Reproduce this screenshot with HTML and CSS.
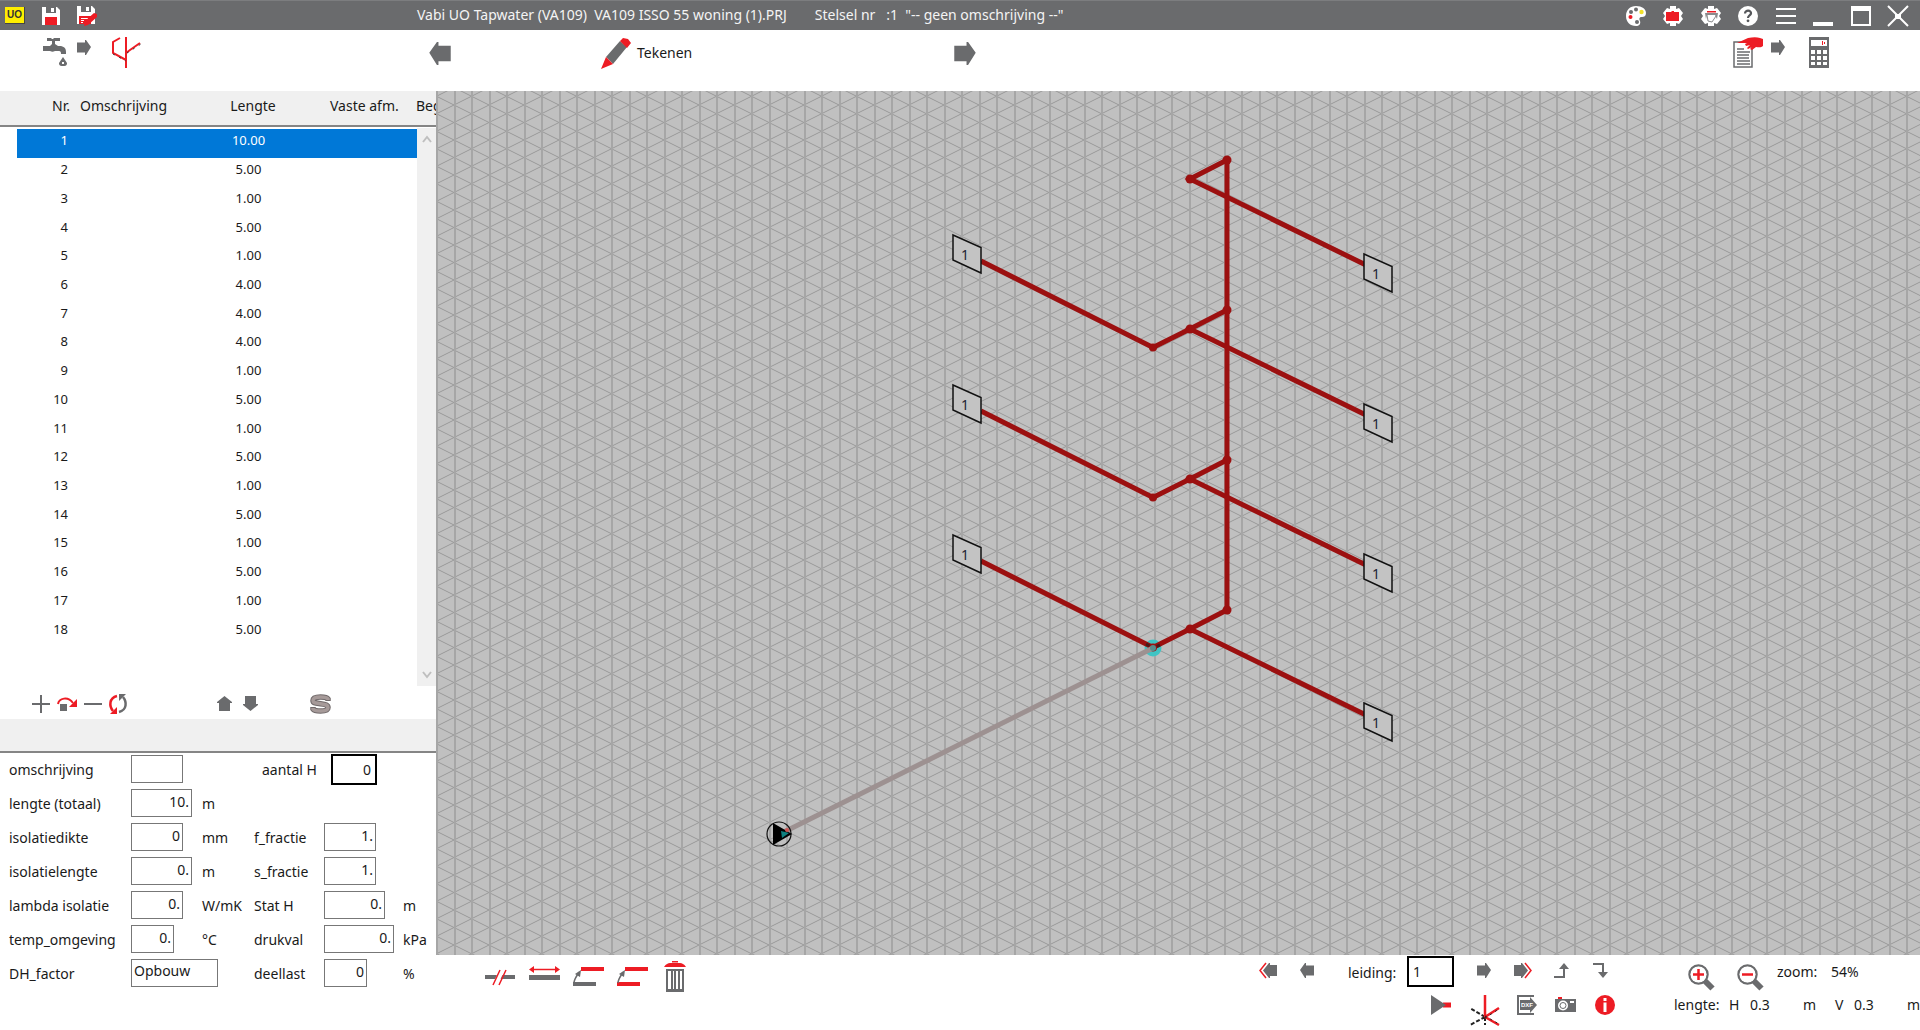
FILE: index.html
```html
<!DOCTYPE html>
<html lang="nl">
<head>
<meta charset="utf-8">
<title>Vabi UO Tapwater (VA109)</title>
<link rel="stylesheet" href="styles.css">
</head>
<body>
<svg class="defs" aria-hidden="true">
  <symbol id="arrow-right" viewBox="0 0 14 15"><path d="M0 2.500h8V0h1l5 7-5 8H8v-2.500H0z"/></symbol>
  <symbol id="arrow-left" viewBox="0 0 14 15"><path d="M14 2.500H6V0H5L0 7l5 8h1v-2.500h8z"/></symbol>
</svg>

<header class="titlebar">
  <div class="quick">
    <button class="icon" aria-label="UO"><span class="uo">UO</span></button>
    <button class="icon" aria-label="Opslaan"><svg width="18" height="18" viewBox="0 0 18 18"><path fill="#fff" d="M0 0h4v6h10V0h1l3 3v15H0z"/><path fill="#fff" d="M9 1h3v4H9z"/><path fill="#ed1c24" d="M3 10h12v8H3z"/></svg></button>
    <button class="icon" aria-label="Opslaan als"><svg width="20" height="20" viewBox="0 0 20 20"><path fill="#fff" d="M0 0h4v6h10V0h1l3 3v15H0z"/><path fill="#fff" d="M9 1h3v4H9z"/><path fill="#ed1c24" d="M2 10h12v8H2z"/><path fill="#fff" d="M4 12h7v1H4zM4 14h3v1H4zM4 16h2v1H4z"/><path fill="#ed1c24" d="M7 20l1-5 9-8 3 1v3l-9 8z"/></svg></button>
  </div>
  <h1 class="title">Vabi UO Tapwater (VA109)  VA109 ISSO 55 woning (1).PRJ<span>Stelsel nr   :1  "-- geen omschrijving --"</span></h1>
  <div class="window-tools">
    <button class="icon" aria-label="Kleuren"><svg width="20" height="20" viewBox="0 0 20 20"><path fill="#fff" d="M10 0c6 0 10 3 10 7 0 3-2 4-4 4-3 0-3 2-2 4 1 3-1 5-4 5C4 20 0 16 0 10S4 0 10 0z"/><circle cx="5" cy="6" r="2" fill="#6a6b6d"/><circle cx="10" cy="3.500" r="2" fill="#6a6b6d"/><circle cx="15.500" cy="6" r="2.200" fill="#f3e12a"/><circle cx="4.500" cy="11" r="2" fill="#ed1c24"/><circle cx="11" cy="16" r="2" fill="#6a6b6d"/></svg></button>
    <button class="icon" aria-label="Projectinstellingen"><svg width="20" height="20" viewBox="0 0 20 20"><path fill="#fff" d="M7 0h6v3l3-1 4 5-2 3 2 3-4 5-3-1v3H7v-3l-3 1-4-5 2-3-2-3 4-5 3 1z"/><path fill="#ed1c24" d="M3 6h5l1-1h2v1h5v9H3z"/></svg></button>
    <button class="icon" aria-label="Printinstellingen"><svg width="20" height="20" viewBox="0 0 20 20"><path fill="#fff" d="M7 0h6v3l3-1 4 5-2 3 2 3-4 5-3-1v3H7v-3l-3 1-4-5 2-3-2-3 4-5 3 1z"/><path fill="#8a8b8d" d="M4 7h13l-1 6-2-4H6l-1 4z"/><path fill="#ed1c24" d="M6 5h9v1.500H6z"/><path fill="none" stroke="#8a8b8d" d="M6 9l1 6 4 1 4-6"/></svg></button>
    <button class="icon" aria-label="Help"><svg width="20" height="20" viewBox="0 0 20 20"><circle cx="10" cy="10" r="10" fill="#fff"/><path fill="none" stroke="#55575a" stroke-width="2.200" d="M7 7.500c0-4 6.500-3.500 6 0-.3 2-3 2-3 4.500"/><circle cx="10" cy="14.800" r="1.400" fill="#55575a"/></svg></button>
    <button class="icon" aria-label="Menu"><svg width="20" height="20" viewBox="0 0 20 20"><path stroke="#fff" stroke-width="2" d="M0 3h20M0 10h20M0 17h20"/></svg></button>
    <button class="icon" aria-label="Minimaliseren"><svg width="20" height="20" viewBox="0 0 20 20"><path fill="#fff" d="M0 16h20v4H0z"/></svg></button>
    <button class="icon" aria-label="Maximaliseren"><svg width="20" height="20" viewBox="0 0 20 20"><path fill="#fff" fill-rule="evenodd" d="M0 0h20v20H0zM2 5v13h16V5z"/></svg></button>
    <button class="icon" aria-label="Sluiten"><svg width="20" height="20" viewBox="0 0 20 20"><path stroke="#fff" stroke-width="2" d="M0 0l20 20M20 0L0 20"/><path fill="#fff" d="M7 8h6v5H7z"/></svg></button>
  </div>
</header>

<nav class="toolbar" aria-label="Stappen">
  <div class="steps-left">
    <button class="icon" aria-label="Tapwater"><svg width="24" height="30" viewBox="0 0 24 30"><g fill="#6a6b6d"><path d="M4 1h4l1 1h1l1-1h6v3h-5v3l3 2h3c4 1 5 3 5 6v2h-5c0-3-1-3-3-3h-3c-2 1-3 1-5 0H0V9h7l2-2V4H4z"/><path d="M20 20l4 6c0 3-2 3-4 3s-4 0-4-3z"/></g><path fill="#fff" d="M19 25h2v2h-2z"/></svg></button>
    <svg class="gray" width="14" height="15"><use href="#arrow-right"/></svg>
    <button class="icon" aria-label="Stelsel"><svg width="30" height="31" viewBox="0 0 30 31"><path fill="none" stroke="#ed1c24" stroke-width="2" d="M15 0v31M15 23L2 16V5l7-4M15 16l4-3 10-7"/><path stroke="#333" stroke-dasharray="2 5" d="M2 17l13 7M16 16l14-9"/></svg></button>
  </div>
  <div class="step-current">
    <button class="icon" aria-label="Vorige stap"><svg class="gray" width="22" height="23"><use href="#arrow-left"/></svg></button>
    <button class="icon step-label"><svg width="30" height="31" viewBox="0 0 30 31"><path fill="#6a6b6d" d="M5 19L19 3l7 6L12 26z"/><path fill="#ed1c24" d="M19 3l3-3 5 1 3 4-4 5zM5 19l7 7-12 5z"/></svg>Tekenen</button>
    <button class="icon" aria-label="Volgende stap"><svg class="gray" width="22" height="23"><use href="#arrow-right"/></svg></button>
  </div>
  <div class="steps-right">
    <button class="icon" aria-label="Gegevens"><svg width="31" height="31" viewBox="0 0 31 31"><path fill="#fff" stroke="#6a6b6d" stroke-width="1.500" d="M1 5h18v25H1z"/><path stroke="#6a6b6d" stroke-width="1.500" d="M4 12h7M4 15h13M4 18h12M4 21h12M4 24h13M4 27h13"/><path fill="#ed1c24" d="M4 6L15 1c5-1 9-1 12 0l3 1v7c-2 2-5 1-7 1l-4 3-2-1 2-2-4 2-1-1 3-3-4 1-1-2 2-1z"/></svg></button>
    <svg class="gray" width="14" height="15"><use href="#arrow-right"/></svg>
    <button class="icon" aria-label="Berekenen"><svg width="20" height="31" viewBox="0 0 20 31"><path fill="#6a6b6d" d="M0 0h20v31H0z"/><path fill="#fff" d="M2 3h16v6H2zM2 13h4v4H2zM8 13h4v4H8zM14 13h4v4h-4zM2 19h4v4H2zM8 19h4v4H8zM14 19h4v4h-4zM2 25h4v3H2zM8 25h4v3H8zM14 25h4v3h-4z"/><path fill="#ed1c24" d="M13 4h1v4h-1zM15 5h1v2h-1z"/></svg></button>
  </div>
</nav>

<main class="workspace">
  <aside class="sidebar">
    <section class="list">
      <table class="pipes">
        <thead><tr><th class="edge"></th><th class="nr">Nr.</th><th class="name">Omschrijving</th><th class="len">Lengte</th><th class="fixed">Vaste afm.</th><th class="beg">Beg</th></tr></thead>
        <tbody>
          <tr class="selected"><td></td><td>1</td><td></td><td>10.00</td><td></td><td></td></tr>
          <tr><td></td><td>2</td><td></td><td>5.00</td><td></td><td></td></tr>
          <tr><td></td><td>3</td><td></td><td>1.00</td><td></td><td></td></tr>
          <tr><td></td><td>4</td><td></td><td>5.00</td><td></td><td></td></tr>
          <tr><td></td><td>5</td><td></td><td>1.00</td><td></td><td></td></tr>
          <tr><td></td><td>6</td><td></td><td>4.00</td><td></td><td></td></tr>
          <tr><td></td><td>7</td><td></td><td>4.00</td><td></td><td></td></tr>
          <tr><td></td><td>8</td><td></td><td>4.00</td><td></td><td></td></tr>
          <tr><td></td><td>9</td><td></td><td>1.00</td><td></td><td></td></tr>
          <tr><td></td><td>10</td><td></td><td>5.00</td><td></td><td></td></tr>
          <tr><td></td><td>11</td><td></td><td>1.00</td><td></td><td></td></tr>
          <tr><td></td><td>12</td><td></td><td>5.00</td><td></td><td></td></tr>
          <tr><td></td><td>13</td><td></td><td>1.00</td><td></td><td></td></tr>
          <tr><td></td><td>14</td><td></td><td>5.00</td><td></td><td></td></tr>
          <tr><td></td><td>15</td><td></td><td>1.00</td><td></td><td></td></tr>
          <tr><td></td><td>16</td><td></td><td>5.00</td><td></td><td></td></tr>
          <tr><td></td><td>17</td><td></td><td>1.00</td><td></td><td></td></tr>
          <tr><td></td><td>18</td><td></td><td>5.00</td><td></td><td></td></tr>
        </tbody>
      </table>
      <div class="scrollbar" aria-hidden="true">
        <svg width="10" height="8" viewBox="0 0 10 8"><path d="M1 7l4-5 4 5"/></svg>
        <svg width="10" height="8" viewBox="0 0 10 8"><path d="M1 1l4 5 4-5"/></svg>
      </div>
    </section>

    <div class="list-tools">
      <button class="icon" aria-label="Toevoegen"><svg width="18" height="18" viewBox="0 0 18 18"><path stroke="#6a6b6d" stroke-width="2" d="M0 9h18M9 0v18"/></svg></button>
      <button class="icon" aria-label="Invoegen"><svg width="20" height="18" viewBox="0 0 20 18"><path fill="#6a6b6d" d="M3 9h7v7H3z"/><path fill="none" stroke="#ed1c24" stroke-width="2" d="M1 9c1-6 10-8 15-1"/><path fill="#ed1c24" d="M20 4v8h-8z"/></svg></button>
      <button class="icon" aria-label="Verwijderen"><svg width="18" height="18" viewBox="0 0 18 18"><path stroke="#6a6b6d" stroke-width="2" d="M0 9h18"/></svg></button>
      <button class="icon" aria-label="Omkeren"><svg width="18" height="20" viewBox="0 0 18 20"><path fill="none" stroke="#ed1c24" stroke-width="2.500" d="M8 2C0 4 0 12 4 17"/><path fill="#ed1c24" d="M8 13v7H1z"/><path fill="none" stroke="#6a6b6d" stroke-width="2.500" d="M10 18c8-2 8-10 4-15"/><path fill="#6a6b6d" d="M10 7V0h7z"/></svg></button>
      <button class="icon up" aria-label="Omhoog"><svg class="gray" width="15" height="15" viewBox="0 0 15 15"><path d="M7.500 0L15 6v1h-2v8H2V7H0V6z"/></svg></button>
      <button class="icon down" aria-label="Omlaag"><svg class="gray" width="15" height="15" viewBox="0 0 15 15"><path d="M7.500 15L15 9V8h-2V0H2v8H0v1z"/></svg></button>
      <button class="icon sort" aria-label="Stelsel S"><svg width="21" height="20" viewBox="0 0 21 20"><path fill="none" stroke="#716a6b" stroke-width="5.500" d="M18 7V5c-1-1.500-3-2-7.500-2S3 4 3 6.500 5 9 10.500 9.700s7.500 1.300 7.500 3.800-3 3.500-7.500 3.500S4 16.500 3 15v-2"/><path fill="none" stroke="#a69a99" stroke-width="3.500" d="M18 6V5c-1-1.500-3-2-7.500-2S3 4 3 6.500 5 9 10.500 9.700s7.500 1.300 7.500 3.800-3 3.500-7.500 3.500S4 16.500 3 15v-1"/></svg></button>
    </div>
    <div class="band"></div>

    <form class="props">
      <label for="oms">omschrijving</label><input id="oms" class="w52" type="text"><span></span><label class="right" for="aantal">aantal H</label><input id="aantal" class="strong" type="text" value="0"><span></span>
      <label for="len">lengte (totaal)</label><input id="len" class="w61" type="text" value="10."><span>m</span><span></span><span></span><span></span>
      <label for="dik">isolatiedikte</label><input id="dik" class="w52" type="text" value="0"><span>mm</span><label for="ff">f_fractie</label><input id="ff" class="w52" type="text" value="1."><span></span>
      <label for="isl">isolatielengte</label><input id="isl" class="w61" type="text" value="0."><span>m</span><label for="sf">s_fractie</label><input id="sf" class="w52" type="text" value="1."><span></span>
      <label for="lam">lambda isolatie</label><input id="lam" class="w52" type="text" value="0."><span>W/mK</span><label for="sta">Stat H</label><input id="sta" class="w61" type="text" value="0."><span>m</span>
      <label for="tem">temp_omgeving</label><input id="tem" class="w43" type="text" value="0."><span>°C</span><label for="dru">drukval</label><input id="dru" class="w70" type="text" value="0."><span>kPa</span>
      <label for="dhf">DH_factor</label><select id="dhf"><option>Opbouw</option></select><span></span><label for="dee">deellast</label><input id="dee" class="w43" type="text" value="0"><span>%</span>
    </form>
  </aside>

  <section class="drawing">
    <svg class="canvas" role="img" aria-label="Isometrische tekening van het leidingstelsel">
      <defs>
        <pattern id="grid" x="18" y="14" width="70" height="35" patternUnits="userSpaceOnUse">
          <path class="diagonals" d="M0 -35L70 0M0 -17.500L70 17.500M0 0L70 35M0 17.500L70 52.500M0 35L70 70M0 0L70 -35M0 17.500L70 -17.500M0 35L70 0M0 52.500L70 17.500M0 70L70 35"/>
          <path class="verticals" d="M1 0v35M18 0v35M36 0v35M53 0v35"/>
        </pattern>
        <g id="tap-right"><path fill="#c3c3c3" stroke="#111" stroke-width="1.500" d="M0 0l28 12.500V38L0 25z"/><text x="12" y="25" text-anchor="middle">1</text></g>
        <g id="floor">
          <path d="M791 69L754 88l180 88"/><circle cx="791" cy="69" r="4.500"/><circle cx="754" cy="88" r="4.500"/>
        </g>
        <g id="branch-left"><path d="M754 88l-37 18.500L545 20"/><circle cx="717" cy="106.500" r="4"/></g>
      </defs>
      <rect width="100%" height="100%" fill="#c0c0c0"/>
      <rect width="100%" height="100%" fill="url(#grid)"/>
      <circle cx="717" cy="557" r="8.500" fill="#3fc4c4"/>
      <g class="pipe">
        <path d="M791 69v450"/>
        <use href="#floor"/><use href="#floor" y="150"/><use href="#floor" y="300"/><use href="#floor" y="450"/>
        <use href="#branch-left" y="150"/><use href="#branch-left" y="300"/><use href="#branch-left" y="450"/>
      </g>
      <path fill="none" stroke="#222" stroke-width="3" stroke-dasharray="4 2" opacity=".7" d="M710 553l7 4 7-3"/>
      <path fill="none" stroke="#9d9191" stroke-width="5" d="M717 557L348 741"/>
      <circle cx="717" cy="557" r="3" fill="#568d8d"/>
      <use href="#tap-right" x="928" y="163"/><use href="#tap-right" x="928" y="313"/><use href="#tap-right" x="928" y="463"/><use href="#tap-right" x="928" y="612"/>
      <use href="#tap-right" x="517" y="144"/><use href="#tap-right" x="517" y="294"/><use href="#tap-right" x="517" y="444"/>
      <circle cx="343" cy="743" r="12" fill="none" stroke="#111" stroke-width="1.200"/>
      <path d="M337 732l19 11-19 11z"/><path fill="#0f8080" d="M345 740l8 2-7 5z"/><circle cx="351" cy="739" r="2" fill="#c55"/>
    </svg>

    <footer class="bottombar">
      <div class="edit-tools">
        <button class="icon" aria-label="Splitsen"><svg width="31" height="31" viewBox="0 0 31 31"><path fill="#6a6b6d" d="M0 14h30v4H0z"/><path stroke="#fff" stroke-width="5" d="M11 22l6-13"/><path stroke="#ed1c24" stroke-width="1.500" d="M8 24l7-15M14 24l7-15"/></svg></button>
        <button class="icon" aria-label="Verlengen"><svg width="31" height="31" viewBox="0 0 31 31"><path fill="#6a6b6d" d="M0 14h31v5H0z"/><path stroke="#ed1c24" stroke-width="1.500" d="M2 8.500h27"/><path fill="#ed1c24" d="M0 8.500L5 5v7zM31 8.500L26 5v7z"/></svg></button>
        <button class="icon" aria-label="Kopiëren"><svg width="31" height="31" viewBox="0 0 31 31"><path fill="#ed1c24" d="M8 6h23v4H8z"/><path fill="#6a6b6d" d="M0 21h23v4H0zM8 9l-6 4 5 3z"/><path fill="none" stroke="#6a6b6d" stroke-width="1.500" d="M1 22c0-4 3-7 5-11"/></svg></button>
        <button class="icon" aria-label="Verplaatsen"><svg width="31" height="31" viewBox="0 0 31 31"><path fill="#ed1c24" d="M8 6h23v4H8zM0 21h23v4H0z"/><path fill="#6a6b6d" d="M8 9l-6 4 5 3z"/><path fill="none" stroke="#6a6b6d" stroke-width="1.500" d="M1 22c0-4 3-7 5-11"/></svg></button>
        <button class="icon" aria-label="Wissen"><svg width="22" height="31" viewBox="0 0 22 31"><path fill="#ed1c24" d="M8 0h6v1.500H8zM0 6c2-3 4-4 6-4h10c2 0 4 1 6 4z"/><path fill="#6a6b6d" fill-rule="evenodd" d="M2 8h18v23H2zM4 10v18h3V10zM9 10v18h1V10zM12 10v18h2V10zM16 10v18h2V10z"/></svg></button>
      </div>

      <div class="nav-tools">
        <div class="row">
          <button class="icon" aria-label="Eerste"><svg width="18" height="15" viewBox="0 0 18 15"><path fill="#6a6b6d" d="M18 2v11h-7v2h-1L4 7.500 10 0h1v2z"/><path fill="none" stroke="#ed1c24" stroke-width="1.500" d="M7 0L1 7.500 7 15"/></svg></button>
          <button class="icon" aria-label="Vorige"><svg class="gray" width="14" height="15"><use href="#arrow-left"/></svg></button>
          <label for="leiding">leiding:</label><input id="leiding" class="strong" type="text" value="1">
          <button class="icon" aria-label="Volgende"><svg class="gray" width="14" height="15"><use href="#arrow-right"/></svg></button>
          <button class="icon" aria-label="Laatste"><svg width="18" height="15" viewBox="0 0 18 15"><path fill="#6a6b6d" d="M0 2v11h7v2h1l6-7.500L8 0H7v2z"/><path fill="none" stroke="#ed1c24" stroke-width="1.500" d="M11 0l6 7.500-6 7.500"/></svg></button>
          <button class="icon" aria-label="Vertakking omhoog"><svg width="15" height="15" viewBox="0 0 15 15"><path fill="none" stroke="#6a6b6d" stroke-width="2" d="M0 14h10V5"/><path fill="#6a6b6d" d="M10 0l5 6H5z"/></svg></button>
          <button class="icon" aria-label="Vertakking omlaag"><svg width="15" height="15" viewBox="0 0 15 15"><path fill="none" stroke="#6a6b6d" stroke-width="2" d="M0 1h10v9"/><path fill="#6a6b6d" d="M10 15l5-6H5z"/></svg></button>
        </div>
        <div class="row second">
          <button class="icon wide" aria-label="Begin"><svg width="20" height="20" viewBox="0 0 20 20"><path fill="#ed1c24" d="M12 7.500h8v5h-8z"/><path fill="#6a6b6d" d="M0 0l15 10L0 20z"/></svg></button>
          <button class="icon wide" aria-label="Assen"><svg width="30" height="44" viewBox="0 0 30 44"><path fill="none" stroke="#222" stroke-width="2" stroke-dasharray="4 2" d="M15 34L0 25M15 34L0 42M15 34v8"/><path stroke="#ed1c24" stroke-width="2.500" d="M15 34V12M15 34l14-9M15 34l14 8"/><path stroke="#222" stroke-dasharray="2 4" d="M15 35l14-9M15 33l14 8"/></svg></button>
          <button class="icon" aria-label="Exporteren naar DXF"><svg width="20" height="20" viewBox="0 0 20 20"><path fill="none" stroke="#6a6b6d" stroke-width="2" d="M17 1H1v18h16"/><path fill="#6a6b6d" d="M3 5h10V2l7 8-7 8v-3H3z"/><text class="dxf" x="4" y="12">DXF</text></svg></button>
          <button class="icon" aria-label="Foto"><svg width="21" height="20" viewBox="0 0 21 20"><path fill="#6a6b6d" d="M0 4h21v13H0z"/><path fill="#ed1c24" d="M3 2h4v2H3z"/><path fill="#fff" d="M15 6h4v2h-4z"/><circle cx="8" cy="10.500" r="5" fill="#fff"/><circle cx="8" cy="10.500" r="3" fill="none" stroke="#6a6b6d"/></svg></button>
          <button class="icon" aria-label="Informatie"><svg width="20" height="20" viewBox="0 0 20 20"><circle cx="10" cy="10" r="10" fill="#ed1c24"/><path fill="#fff" d="M8.500 3h3v3h-3zM8.500 7.500h3V17h-3z"/></svg></button>
        </div>
      </div>

      <div class="readout">
        <div class="row">
          <button class="icon zoom" aria-label="Inzoomen"><svg width="27" height="27" viewBox="0 0 27 27"><circle cx="10.500" cy="10.500" r="9" fill="#fff" stroke="#6a6b6d" stroke-width="2.500"/><path stroke="#6a6b6d" stroke-width="6" d="M16.500 16.500l8 8"/><circle cx="10.500" cy="10.500" r="8" fill="#fff"/><path stroke="#ed1c24" stroke-width="2.500" d="M5 10.500h11M10.500 5v11"/></svg></button>
          <button class="icon zoom" aria-label="Uitzoomen"><svg width="27" height="27" viewBox="0 0 27 27"><circle cx="10.500" cy="10.500" r="9" fill="#fff" stroke="#6a6b6d" stroke-width="2.500"/><path stroke="#6a6b6d" stroke-width="6" d="M16.500 16.500l8 8"/><circle cx="10.500" cy="10.500" r="8" fill="#fff"/><path stroke="#ed1c24" stroke-width="2.500" d="M5 10.500h11"/></svg></button>
          <span class="zoom-label">zoom:</span><span>54%</span>
        </div>
        <div class="row sizes">
          <span>lengte:</span><span>H</span><output>0.3</output><span>m</span><span>V</span><output>0.3</output><span>m</span>
        </div>
      </div>
    </footer>
  </section>
</main>
</body>
</html>
```
FILE: styles.css
```css
* { box-sizing: border-box; }

body {
  margin: 0;
  min-height: 100vh;
  display: flex;
  flex-direction: column;
  background: #fff;
  color: #1a1a1a;
  font: 14px/20px "Noto Sans", "Open Sans", sans-serif;
  overflow-x: hidden;
}

.defs { display: none; }
svg { display: block; flex: none; overflow: visible; }
.gray { fill: #6a6b6d; }

.icon {
  display: flex;
  align-items: center;
  justify-content: center;
  padding: 0;
  border: 0;
  background: none;
  color: inherit;
  font: inherit;
}

/* Title bar */
.titlebar {
  display: flex;
  align-items: center;
  height: 30px;
  background: #6a6b6d;
  border-top: 1px solid #7c7d7f;
  color: #f4f4f4;
}
.quick {
  display: flex;
  gap: 17px;
  width: 417px;
  padding-left: 5px;
}
.uo {
  width: 20px;
  height: 17px;
  background: #ffee00;
  border-right: 1px solid #444;
  border-bottom: 1px solid #444;
  color: #333;
  font: bold 10px/16px "Liberation Sans", sans-serif;
}
.title {
  flex: 1;
  margin: 0 0 2px;
  font-size: 14px;
  font-weight: 400;
  line-height: 20px;
  white-space: pre;
}
.title span { padding-left: 28px; }
.window-tools {
  display: grid;
  grid-template-columns: repeat(8, 1fr);
  width: 300px;
  margin-right: 3px;
}

/* Step bar */
.toolbar {
  display: flex;
  height: 61px;
  padding-top: 7px;
}
.steps-left, .steps-right, .step-current {
  display: flex;
  align-items: flex-start;
}
.steps-left { width: 429px; gap: 10px; padding-left: 43px; }
.steps-left > svg, .steps-right > svg { margin-top: 3px; }
.steps-left > svg { margin-right: 10px; }
.step-current { width: 547px; justify-content: space-between; }
.step-current > .icon { height: 32px; }
.step-current > .step-label { width: 203px; justify-content: flex-start; gap: 6px; }
.steps-right { margin-left: auto; padding-right: 91px; gap: 7px; }
.steps-right > svg { margin-right: 17px; }

/* Work area */
.workspace {
  flex: 1;
  display: grid;
  grid-template-columns: 436px 1fr;
}
.sidebar, .drawing {
  display: flex;
  flex-direction: column;
  min-width: 0;
}

/* Pipe list */
.list {
  position: relative;
  flex: 1;
  overflow: hidden;
}
.pipes {
  width: 100%;
  height: 555px;
  table-layout: fixed;
  border-collapse: separate;
  border-spacing: 0;
}
.pipes th {
  height: 36px;
  padding: 0 0 4px;
  background: #f0f0f0;
  border-bottom: 2px solid #858585;
  font-weight: 400;
  text-align: left;
  white-space: nowrap;
}
.pipes .edge { width: 17px; }
.pipes .nr { width: 53px; text-align: right; }
.pipes .name { width: 140px; padding-left: 10px; }
.pipes .len { width: 86px; text-align: center; }
.pipes .fixed { padding-left: 34px; }
.pipes .beg { width: 20px; }
.pipes td { padding: 0 0 6px; font-size: 13px; }
.pipes td:nth-child(2) { text-align: right; padding-right: 2px; }
.pipes td:nth-child(4) { text-align: center; padding-right: 9px; }
.pipes .selected td { border-top: 2px solid #fff; color: #fff; background: #0078d7; }
.pipes .selected td:first-child { background: none; }
.scrollbar {
  position: absolute;
  top: 37px;
  right: 0;
  bottom: 0;
  width: 19px;
  padding: 7px 0;
  background: #f0f0f0;
  display: flex;
  flex-direction: column;
  justify-content: space-between;
  align-items: center;
}
.scrollbar path { fill: none; stroke: #bfbfbf; stroke-width: 2; }

.list-tools {
  display: flex;
  align-items: center;
  gap: 7px;
  height: 33px;
  padding: 2px 0 0 32px;
}
.list-tools .up { margin-left: 83px; }
.list-tools .down { margin-left: 4px; }
.list-tools .sort { margin-left: 45px; }
.band {
  height: 34px;
  background: #f0f0f0;
  border-bottom: 2px solid #858585;
}

/* Properties */
.props {
  display: grid;
  grid-template-columns: 122px 71px 52px 70px 79px 1fr;
  grid-auto-rows: 28px;
  row-gap: 6px;
  align-items: center;
  padding: 2px 0 43px 9px;
  white-space: nowrap;
}
.props .right { padding-left: 8px; }
.props label, .props span { padding-top: 1px; }
input, select {
  height: 28px;
  padding: 0 2px 4px;
  border: 1px solid #777;
  border-radius: 0;
  background: #fff;
  color: #1a1a1a;
  font: 14px/20px "Noto Sans", "Open Sans", sans-serif;
  text-align: right;
  appearance: none;
}
.w43 { width: 43px; }
.w52 { width: 52px; }
.w61 { width: 61px; }
.w70 { width: 70px; }
select { width: 87px; text-align: left; }
.strong {
  width: 46px;
  height: 31px;
  padding: 0 4px;
  border: 2px solid #000;
}
.props .strong { justify-self: end; margin-right: 26px; }

/* Drawing */
.canvas {
  flex: 1;
  width: 100%;
  min-height: 0;
  overflow: hidden;
}
.diagonals { fill: none; stroke: #999; stroke-width: 1; }
.verticals { fill: none; stroke: #a6a6a6; stroke-width: 2; }
.pipe { fill: none; stroke: #9c1010; stroke-width: 5; }
.pipe circle, #floor circle, #branch-left circle { fill: #9c1010; stroke: none; }
.canvas text { fill: #223; font-size: 14px; }

.bottombar {
  display: flex;
  height: 75px;
}
.edit-tools {
  display: flex;
  align-items: flex-start;
  gap: 13px;
  padding: 6px 0 0 49px;
}
.edit-tools .icon:last-child { margin-left: 3px; }
.nav-tools { margin-left: auto; }
.row {
  display: flex;
  align-items: center;
  height: 33px;
}
.nav-tools .icon { width: 39px; height: 33px; padding-bottom: 2px; }
.nav-tools .second .icon { padding: 0; }
.nav-tools .wide { width: 44px; }
.nav-tools .second { justify-content: flex-end; }
.nav-tools label { width: 81px; padding: 3px 0 0 22px; }
.nav-tools .strong { width: 47px; margin-right: 10px; text-align: left; }
.nav-tools .row:first-child { padding-right: 4px; }
.dxf { fill: #fff; font: bold 6px "Liberation Sans", sans-serif; }

.readout { width: 296px; padding-left: 50px; overflow: hidden; }
.zoom { width: 49px; height: 33px; padding: 12px 0 0 6px; }
.zoom-label { width: 54px; margin-left: 5px; }
.sizes {
  display: grid;
  grid-template-columns: 55px 21px 53px 32px 19px 53px 13px;
}
```
